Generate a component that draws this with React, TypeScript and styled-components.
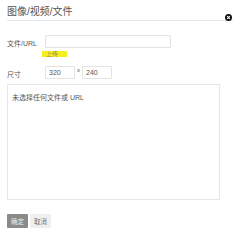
import styled, { createGlobalStyle } from "styled-components"

const Global = createGlobalStyle`
body {
  margin: 0;
  background: #fff;
  font-family: "Liberation Sans", "Noto Sans CJK SC", sans-serif;
  color: #555;
}
`

const Dialog = styled.div`
width: 242px;
height: 240px;
padding: 0 7px 0 7px;
box-sizing: border-box;
display: flex;
flex-direction: column;
`

const Header = styled.div`
height: 20px;
display: flex;
align-items: center;
justify-content: space-between;
border-bottom: 1px solid #dfe8ee;
margin-right: 2px;
`

const Title = styled.h2`
margin: 0;
font-weight: 400;
font-size: 10px;
color: #555;
`

const Close = styled.span`
display: block;
width: 7px;
height: 7px;
margin-right: 1px;
`

const Row = styled.div<{ $top: number }>`
display: flex;
align-items: center;
margin-top: ${p => p.$top}px;
`

const Label = styled.label`
width: 38px;
font-size: 7px;
color: #555;
padding-top: 3px;
`

const Input = styled.div<{ $w: number }>`
width: ${p => p.$w}px;
height: 13px;
box-sizing: border-box;
border: 1px solid #e4e4e4;
border-radius: 1px;
font-size: 7px;
color: #555;
padding-left: 3px;
display: flex;
align-items: center;
`

const UploadRow = styled.div`
display: flex;
margin-top: 3px;
padding-left: 35px;
`

const Upload = styled.span`
display: block;
width: 25px;
height: 6px;
background: #f3f01e;
font-size: 6px;
line-height: 6px;
color: #8e8e55;
padding-left: 4px;
box-sizing: border-box;
`

const Times = styled.span`
font-size: 6px;
width: 7px;
text-align: center;
align-self: flex-start;
margin-top: 1px;
`

const Preview = styled.div`
margin-top: 5px;
width: 213px;
height: 116px;
box-sizing: border-box;
border: 1px solid #e6e6e6;
font-size: 7px;
color: #555;
padding: 7px 4px;
`

const Buttons = styled.div`
display: flex;
gap: 2px;
margin-top: 14px;
`

const Button = styled.button<{ $primary?: boolean }>`
height: 14px;
padding: 0 4px;
border: none;
border-radius: 1px;
font-family: inherit;
font-size: 6.5px;
background: ${p => (p.$primary ? "#8a8a8a" : "#efefef")};
color: ${p => (p.$primary ? "#eee" : "#777")};
`

export default function App() {
  return (
    <>
      <Global />
      <Dialog>
        <Header>
          <Title>图像/视频/文件</Title>
          <Close>
            <svg width="7" height="7" viewBox="0 0 14 14">
              <circle cx="7" cy="7" r="7" fill="#111" />
              <path d="M4.3 4.3 L9.7 9.7 M9.7 4.3 L4.3 9.7" stroke="#fff" strokeWidth="2.2" />
            </svg>
          </Close>
        </Header>
        <Row $top={14}>
          <Label>文件/URL</Label>
          <Input $w={126} />
        </Row>
        <UploadRow>
          <Upload>上传</Upload>
        </UploadRow>
        <Row $top={9}>
          <Label>尺寸</Label>
          <Input $w={30}>320</Input>
          <Times>x</Times>
          <Input $w={30}>240</Input>
        </Row>
        <Preview>未选择任何文件或 URL</Preview>
        <Buttons>
          <Button $primary>确定</Button>
          <Button>取消</Button>
        </Buttons>
      </Dialog>
    </>
  )
}
